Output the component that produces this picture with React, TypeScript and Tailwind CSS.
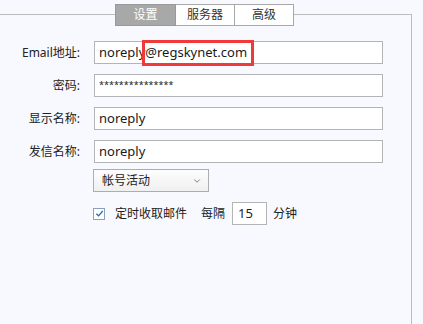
import { ChevronDown } from 'lucide-react';

const font = { fontFamily: '"Noto Sans", "Noto Sans CJK SC", sans-serif' };

function Row({ label, value, highlight, secret }: { label: string; value: string; highlight?: boolean; secret?: boolean }) {
	return (
		<div className="flex items-center h-[23px]">
			<div className="w-[81px] text-right text-[12px] text-[#222] pr-[1px]">{label}</div>
			<div className="relative ml-[13px] w-[289px] h-[23px] bg-white border border-[#b4b4b4] flex items-center px-[4px] text-[13px] text-[#1a1a1a]">
				{secret ? <span className="text-[9px] leading-none -mt-[3px]">{value}</span> : value}
				{highlight && (
					<span className="absolute left-[47px] top-[-2px] w-[112px] h-[26px] border-[3px] border-[#f03a3a]" />
				)}
			</div>
		</div>
	);
}

export default function App() {
	return (
		<div className="w-[423px] h-[324px] bg-[#f7f9fe] overflow-hidden" style={font}>
			<div className="mt-[14px] w-[412px] h-[310px] border-t border-r border-[#bcbcbc]">
				<div className="-mt-[11px] ml-[115px] flex h-[22px] text-[12px]">
					<div className="w-[61px] bg-[#a8a8a8] border border-[#999] text-white flex items-center justify-center">设置</div>
					<div className="w-[59px] bg-white border-y border-r border-[#a8a8a8] text-[#333] flex items-center justify-center">服务器</div>
					<div className="w-[59px] bg-white border-y border-r border-[#a8a8a8] text-[#333] flex items-center justify-center">高级</div>
				</div>
				<div className="mt-[15px] flex flex-col gap-[10px]">
					<Row label="Email地址:" value="noreply@regskynet.com" highlight />
					<Row label="密码:" value="***************" secret />
					<Row label="显示名称:" value="noreply" />
					<Row label="发信名称:" value="noreply" />
				</div>
				<div className="ml-[93px] mt-[6px] w-[116px] h-[23px] border border-[#adadad] bg-gradient-to-b from-[#fdfdfd] to-[#f0f0f0] flex items-center justify-between pl-[8px] pr-[6px] text-[12px] text-[#222]">
					<span>帐号活动</span>
					<ChevronDown className="w-[10px] h-[10px] text-[#666]" strokeWidth={2} />
				</div>
				<div className="ml-[93px] mt-[10px] flex items-center h-[23px] text-[12px] text-[#222]">
					<div className="w-[12px] h-[12px] border border-[#8aa0c0] bg-white flex items-center justify-center">
						<svg viewBox="0 0 10 10" className="w-[9px] h-[9px]">
							<path d="M1.5 5.2 L4 7.6 L8.6 2.2" fill="none" stroke="#3569b0" strokeWidth="1.5" />
						</svg>
					</div>
					<span className="ml-[10px]">定时收取邮件</span>
					<span className="ml-[14px]">每隔</span>
					<div className="ml-[7px] w-[35px] h-[23px] bg-white border border-[#b4b4b4] flex items-center px-[5px] text-[13px]">15</div>
					<span className="ml-[6px]">分钟</span>
				</div>
			</div>
		</div>
	);
}
